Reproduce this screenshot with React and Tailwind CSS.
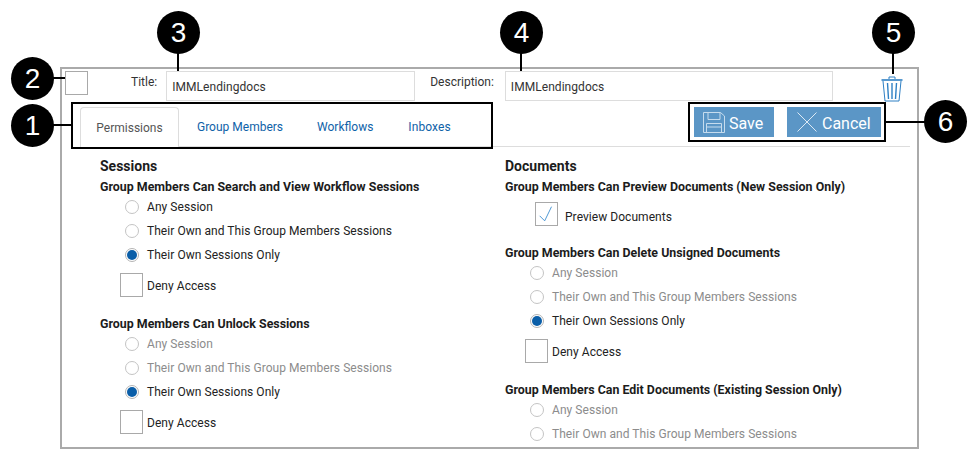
import React from "react";

const Radio = ({ label, checked, disabled }) => (
    <div className="h-6 flex items-center gap-2 pl-[25px]">
        <span className={`w-[14px] h-[14px] rounded-full border bg-white flex items-center justify-center shrink-0 ${checked ? "border-[#b5b5b5]" : "border-[#c4c4c4]"}`}>
            {checked && <span className="w-[10px] h-[10px] rounded-full bg-[#0a5ea8]" />}
        </span>
        <span className={`text-[12px] tracking-[0.05px] ${disabled && !checked ? "text-[#8c8c8c]" : "text-[#222]"}`}>{label}</span>
    </div>
);

const Box = ({ checked }) => (
    <span className="block w-[23px] h-[24px] border border-[#a9a9a9] bg-white shrink-0">
        {checked && (
            <svg viewBox="0 0 23 24" className="w-full h-full" fill="none" stroke="#3f8fd0" strokeWidth="1">
                <path d="M4 14 L9.5 19.5 L17 4" />
            </svg>
        )}
    </span>
);

const Deny = () => (
    <div className="mt-[6px] flex items-center gap-1 pl-[20px]">
        <Box />
        <span className="text-[12px] tracking-[0.05px] text-[#222] pt-[2px]">Deny Access</span>
    </div>
);

const Question = ({ children, className = "" }) => (
    <h3 className={`h-4 leading-4 text-[12.4px] font-bold text-[#1c1c1c] whitespace-nowrap ${className}`}>{children}</h3>
);

const Options = ({ disabled }) => (
    <div>
        <Radio label="Any Session" disabled={disabled} />
        <Radio label="Their Own and This Group Members Sessions" disabled={disabled} />
        <Radio label="Their Own Sessions Only" checked disabled={disabled} />
    </div>
);

// numbered callouts that sit over the screenshot
const Badge = ({ n, className }) => (
    <div className={`absolute w-[43px] h-[43px] rounded-full bg-black text-white flex items-center justify-center text-[28px] font-['Liberation_Sans',sans-serif] ${className}`}>
        {n}
    </div>
);

const Trash = () => (
    <svg viewBox="0 0 22 26" className="w-[22px] h-[26px]" fill="none" stroke="#2f80c4" strokeWidth="1">
        <path d="M8 3 V1 H14 V3" />
        <path d="M0.5 4 H21.5" strokeWidth="1.6" />
        <path d="M2 5 L4 25 H18 L20 5" />
        <path d="M6.5 7 L7.5 23 M11 7 V23 M15.5 7 L14.5 23" strokeWidth="1.4" />
    </svg>
);

const Floppy = () => (
    <svg viewBox="0 0 22 21" className="w-[22px] h-[21px]" fill="none" stroke="#c6dcee" strokeWidth="1">
        <path d="M0.5 0.5 H17.5 L21.5 4 V20.5 H0.5 Z" />
        <path d="M5 0.5 V7.5 H17 V0.5" />
        <path d="M3.5 20.5 V11.5 H18.5 V20.5 M3.5 15 H18.5" />
    </svg>
);

const App = () => {
    return (
        <div className="relative w-[979px] h-[460px] bg-white overflow-hidden font-['Roboto',sans-serif]">
            <div className="absolute left-[60px] top-[67px] w-[859px] h-[382px] border-2 border-[#aaaaaa] overflow-hidden">
                <div className="flex items-start pt-[2px] pl-[3px]">
                    <Box />
                    <label className="ml-[43px] mt-[2px] text-[12px] text-[#333]">Title:</label>
                    <div className="ml-[9px] w-[249px] h-[30px] border border-[#dddddd] flex items-center pl-[5px] pt-[2px] text-[12px] tracking-[0.05px] text-[#333]">IMMLendingdocs</div>
                    <label className="ml-[15px] mt-[2px] text-[12px] text-[#333]">Description:</label>
                    <div className="ml-[11px] w-[328px] h-[30px] border border-[#dddddd] flex items-center pl-[5px] pt-[2px] text-[12px] tracking-[0.05px] text-[#333]">IMMLendingdocs</div>
                    <div className="ml-[48px] mt-[5px]"><Trash /></div>
                </div>

                <div className="mt-[5px] ml-[18px] mr-[7px] h-[40px] flex items-start border-b border-[#dddddd]">
                    <div className="w-[99px] h-[40px] border border-b-0 border-[#dddddd] rounded-t-[4px] bg-white flex items-center justify-center text-[12px] text-[#555]">Permissions</div>
                    <a className="ml-[18px] h-[40px] flex items-center text-[12px] text-[#0f62a8]">Group Members</a>
                    <a className="ml-[34px] h-[40px] flex items-center text-[12px] text-[#0f62a8]">Workflows</a>
                    <a className="ml-[35px] h-[40px] flex items-center text-[12px] tracking-[0.1px] text-[#0f62a8]">Inboxes</a>
                    <div className="ml-auto mr-[29px] flex gap-[13px]">
                        <button type="button" className="w-[80px] h-[30px] bg-[#5b96c6] text-white text-[16px] flex items-center pl-[9px] gap-[4px]">
                            <Floppy />
                            <span className="pt-[3px]">Save</span>
                        </button>
                        <button type="button" className="w-[94px] h-[30px] bg-[#5b96c6] text-white text-[16px] flex items-center pl-[10px] gap-[5px]">
                            <svg viewBox="0 0 20 20" className="w-5 h-5" fill="none" stroke="#dce9f4" strokeWidth="1"><path d="M0.5 0.5 L19.5 19.5 M19.5 0.5 L0.5 19.5" /></svg>
                            <span className="pt-[3px]">Cancel</span>
                        </button>
                    </div>
                </div>

                <div className="grid grid-cols-[405px_1fr] pl-[38px] pt-[9px]">
                    <div>
                        <h2 className="h-5 leading-5 text-[14px] font-bold text-[#1c1c1c]">Sessions</h2>
                        <Question className="mt-[3px]">Group Members Can Search and View Workflow Sessions</Question>
                        <Options />
                        <Deny />
                        <Question className="mt-[19px]">Group Members Can Unlock Sessions</Question>
                        <Options disabled />
                        <Deny />
                    </div>
                    <div>
                        <h2 className="h-5 leading-5 text-[14px] font-bold text-[#1c1c1c]">Documents</h2>
                        <Question className="mt-[3px]">Group Members Can Preview Documents (New Session Only)</Question>
                        <div className="mt-[7px] pl-[30px] flex items-center gap-[7px]">
                            <Box checked />
                            <span className="text-[12px] tracking-[0.05px] text-[#222] pt-[6px]">Preview Documents</span>
                        </div>
                        <Question className="mt-[19px]">Group Members Can Delete Unsigned Documents</Question>
                        <Options disabled />
                        <Deny />
                        <Question className="mt-[19px]">Group Members Can Edit Documents (Existing Session Only)</Question>
                        <Radio label="Any Session" disabled />
                        <Radio label="Their Own and This Group Members Sessions" disabled />
                    </div>
                </div>
            </div>

            {/* annotation boxes and leader lines */}
            <div className="absolute left-[71px] top-[102px] w-[422px] h-[47px] border-2 border-black" />
            <div className="absolute left-[688px] top-[102px] w-[198px] h-[40px] border-2 border-black" />
            <div className="absolute left-[50px] top-[124px] w-[21px] h-[2px] bg-black" />
            <div className="absolute left-[50px] top-[77px] w-[15px] h-[2px] bg-black" />
            <div className="absolute left-[177px] top-[50px] w-[2px] h-[21px] bg-black" />
            <div className="absolute left-[520px] top-[50px] w-[2px] h-[21px] bg-black" />
            <div className="absolute left-[892px] top-[50px] w-[2px] h-[24px] bg-black" />
            <div className="absolute left-[886px] top-[121px] w-[40px] h-[2px] bg-black" />
            <Badge n="1" className="left-[11px] top-[104px]" />
            <Badge n="2" className="left-[11px] top-[57px]" />
            <Badge n="3" className="left-[157px] top-[11px]" />
            <Badge n="4" className="left-[500px] top-[11px]" />
            <Badge n="5" className="left-[872px] top-[11px]" />
            <Badge n="6" className="left-[924px] top-[100px]" />
        </div>
    );
};

export default App;
